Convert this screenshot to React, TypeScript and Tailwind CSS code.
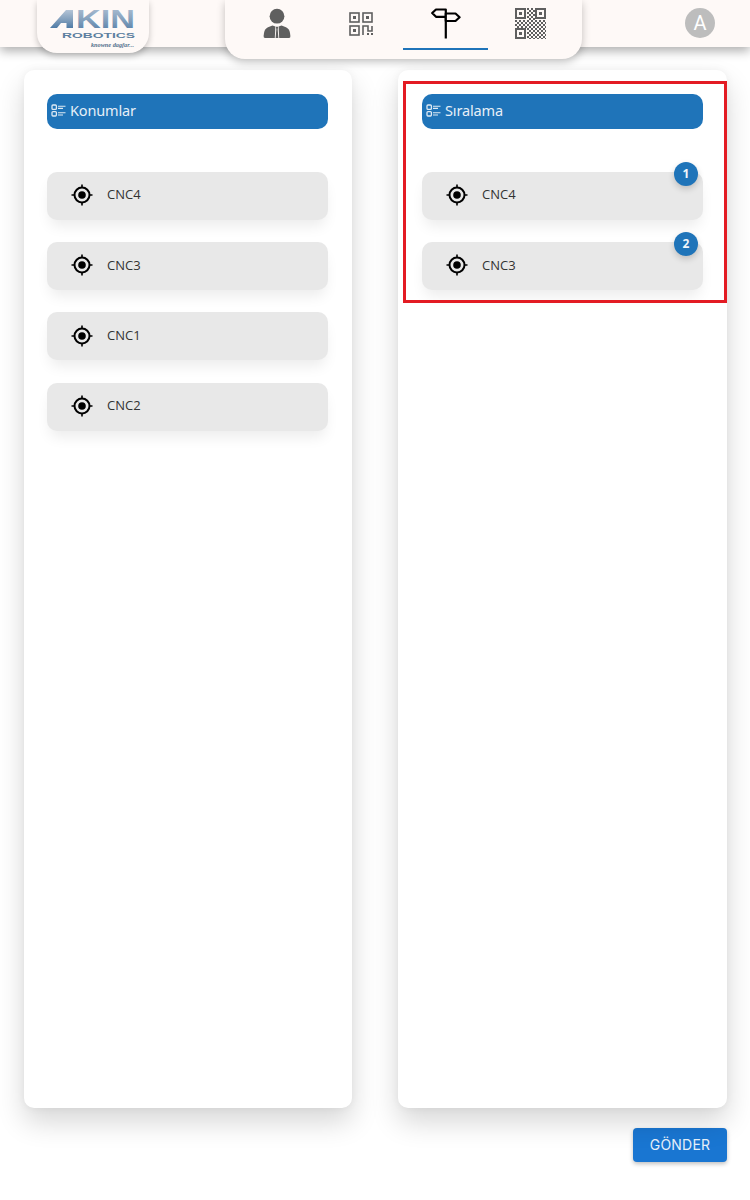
import React from 'react';

const locations = ['CNC4', 'CNC3', 'CNC1', 'CNC2'];
const ordered = ['CNC4', 'CNC3'];

const PersonIcon = () => (
    <svg width="28" height="32" viewBox="0 0 28 32" fill="#5f5f5f">
        <circle cx="14" cy="8.2" r="7.4" />
        <path d="M9.5 17.6 L12.4 18.6 L11.8 30 L2 30 Q0.4 30 0.6 28 L1 25 Q1.6 20.8 5 19.3 Z" />
        <path d="M18.5 17.6 L15.6 18.6 L16.2 30 L26 30 Q27.6 30 27.4 28 L27 25 Q26.4 20.8 23 19.3 Z" />
        <path d="M12.9 18.8 H15.1 L14.7 21.4 L15.4 30 H12.6 L13.3 21.4 Z" />
    </svg>
);

const QrSmallIcon = () => (
    <svg width="24" height="24" viewBox="0 0 24 24" fill="none" stroke="#5f5f5f" strokeWidth="1.6">
        <rect x="1" y="1" width="9" height="9" />
        <rect x="14" y="1" width="9" height="9" />
        <rect x="1" y="14" width="9" height="9" />
        <path d="M14 23 V14 H19 V19 H23 V14" />
        <g fill="#5f5f5f" stroke="none">
            <rect x="4" y="4" width="3" height="3" />
            <rect x="17" y="4" width="3" height="3" />
            <rect x="4" y="17" width="3" height="3" />
            <rect x="18" y="21" width="2" height="2" />
            <rect x="22" y="21" width="2" height="2" />
        </g>
    </svg>
);

const SignpostIcon = () => (
    <svg width="30" height="31" viewBox="0 0 30 31" fill="none" stroke="#000" strokeWidth="2.2" strokeLinejoin="round">
        <path d="M14.8 9 V30.5" />
        <path d="M14.8 1.5 H5 L1.2 5 L5 8.8 H14.8 Z" fill="#fef9f7" />
        <path d="M14.8 5.5 H24.5 L28.6 9.2 L24.5 13 H14.8 Z" fill="#fef9f7" />
    </svg>
);

// dither cells of the big QR code
const qrCells: [number, number][] = [];
for (let y = 0; y < 31; y += 2) {
    for (let x = 0; x < 31; x += 2) {
        const inFinder = (x < 12 && y < 12) || (x > 18 && y < 12) || (x < 12 && y > 18);
        if (!inFinder && (x + y) % 4 === 0) qrCells.push([x, y]);
    }
}

const QrBigIcon = () => (
    <svg width="31" height="31" viewBox="0 0 31 31" fill="none" stroke="#5f5f5f" strokeWidth="2">
        <rect x="1" y="1" width="9" height="9" />
        <rect x="21" y="1" width="9" height="9" />
        <rect x="1" y="21" width="9" height="9" />
        <g fill="#5f5f5f" stroke="none">
            <rect x="4" y="4" width="3" height="3" />
            <rect x="24" y="4" width="3" height="3" />
            <rect x="4" y="24" width="3" height="3" />
            {qrCells.map(([x, y]) => (
                <rect key={`${x}-${y}`} x={x} y={y} width="2" height="2" />
            ))}
        </g>
    </svg>
);

const ChecklistIcon = () => (
    <svg width="15" height="13" viewBox="0 0 15 13" fill="none" stroke="#dfeaf4" strokeWidth="1.3">
        <rect x="1" y="1" width="4.4" height="4.4" rx="1" />
        <rect x="1" y="7.6" width="4.4" height="4.4" rx="1" />
        <path d="M7 2.2 H14.5 M7 4.4 H12 M7 8.8 H14.5 M7 11 H12" strokeWidth="1.1" />
    </svg>
);

const TargetIcon = () => (
    <svg width="22" height="22" viewBox="0 0 22 22" fill="none" stroke="#000" strokeWidth="2">
        <circle cx="11" cy="11" r="7.5" />
        <circle cx="11" cy="11" r="3.8" fill="#000" stroke="none" />
        <path d="M11 0.5 V3.5 M11 18.5 V21.5 M0.5 11 H3.5 M18.5 11 H21.5" strokeWidth="1.6" />
    </svg>
);

const Logo = () => (
    <svg width="88" height="48" viewBox="0 0 88 48">
        <defs>
            <linearGradient id="akin" x1="0" y1="0" x2="0" y2="1">
                <stop offset="0" stopColor="#b4c4d6" />
                <stop offset="0.5" stopColor="#86a2be" />
                <stop offset="1" stopColor="#4f7ba6" />
            </linearGradient>
        </defs>
        <path d="M1 25 L17 7 H24 L24 25 H17.5 L17.5 20 H12 L8 25 Z" fill="url(#akin)" />
        <text x="27" y="25" textLength="59" lengthAdjust="spacingAndGlyphs" fontFamily="Liberation Sans" fontWeight="700" fontSize="25" fill="url(#akin)">
            KIN
        </text>
        <text x="13" y="34.5" textLength="73" lengthAdjust="spacingAndGlyphs" fontFamily="Liberation Sans" fontWeight="700" fontSize="8" fill="#5c7f9f">
            ROBOTICS
        </text>
        <text x="42" y="44" textLength="43" lengthAdjust="spacingAndGlyphs" fontFamily="Liberation Serif" fontStyle="italic" fontWeight="700" fontSize="6" fill="#53708c">
            knowne dagfar...
        </text>
    </svg>
);

const Panel = ({ title, items, numbered, className }: { title: string; items: string[]; numbered?: boolean; className: string }) => (
    <div className={`h-[1038px] w-full rounded-[10px] bg-white pt-6 shadow-[0_14px_28px_rgba(0,0,0,0.16),0_0_8px_rgba(0,0,0,0.05)] ${className}`}>
        <div className="flex h-[35px] items-center gap-[4px] rounded-[10px] bg-[#1f74b9] pb-[2px] pl-[4px] font-['Noto_Sans',sans-serif] text-[14.5px] tracking-[-0.15px] text-[#e6eff7]">
            <ChecklistIcon />
            <span>{title}</span>
        </div>
        <div className="mt-[42.7px] flex flex-col gap-[22.3px]">
            {items.map((item, index) => (
                <div
                    key={item}
                    className="relative flex h-[48px] items-center gap-[14px] rounded-[10px] bg-[#e8e8e8] pb-[1px] pl-[24px] shadow-[0_9px_14px_-3px_rgba(0,0,0,0.08)]"
                >
                    <TargetIcon />
                    <span className="font-['Open_Sans',sans-serif] text-[13px] text-[#333]">{item}</span>
                    {numbered && (
                        <span className="absolute right-[5px] top-[-10px] flex h-6 w-6 items-center justify-center rounded-full bg-[#1f74b9] font-['Open_Sans',sans-serif] text-[12px] font-bold text-[#f2f6fa] shadow-[0_3px_6px_rgba(0,0,0,0.18)]">
                            {index + 1}
                        </span>
                    )}
                </div>
            ))}
        </div>
    </div>
);

export default function App() {
    return (
        <div className="relative h-[1200px] w-[750px] overflow-hidden bg-white">
            <div className="relative z-10 flex h-[47px] items-start bg-[#fef9f7] shadow-[0_4px_10px_rgba(0,0,0,0.32)]">
                <div className="ml-[37px] flex h-[53px] w-[112px] justify-center rounded-b-[20px] bg-[#fef9f7] pt-[3px] shadow-[0_3px_6px_rgba(0,0,0,0.22)]">
                    <Logo />
                </div>
                <div className="ml-[76px] flex h-[59px] w-[357px] items-start rounded-b-[20px] bg-[#fef9f7] pl-[22px] shadow-[0_3px_8px_rgba(0,0,0,0.24)]">
                    <div className="flex w-[60px] justify-center pt-[8px]">
                        <PersonIcon />
                    </div>
                    <div className="ml-[42px] flex w-[24px] justify-center pt-[12px]">
                        <QrSmallIcon />
                    </div>
                    <div className="ml-[30px] flex h-[50px] w-[85px] justify-center border-b-2 border-[#1f74b9] pt-[8px]">
                        <SignpostIcon />
                    </div>
                    <div className="ml-[27px] flex justify-center pt-[8px]">
                        <QrBigIcon />
                    </div>
                </div>
                <div className="ml-[103px] mt-[8px] flex h-[30px] w-[30px] items-center justify-center rounded-full bg-[#bdbdbd] font-['Roboto',sans-serif] text-[20px] text-white">
                    A
                </div>
            </div>

            <div className="flex gap-[46px] pl-[24px] pt-[23px]">
                <div className="w-[328px]">
                    <Panel title="Konumlar" items={locations} className="pl-[23px] pr-[24px]" />
                </div>
                <div className="relative w-[329px]">
                    <Panel title="Sıralama" items={ordered} numbered className="px-[24px]" />
                    <div className="absolute left-[5px] top-[11px] h-[222px] w-[324px] border-[3px] border-[#e31b23]" />
                </div>
            </div>

            <div className="mt-[20px] flex justify-end pr-[23px]">
                <button className="h-[34px] w-[94px] rounded bg-[#1976d2] pb-[1px] font-['Inter',sans-serif] text-[14px] tracking-[0.2px] text-[#e6f0fa] shadow-[0_2px_4px_rgba(0,0,0,0.25)]">
                    GÖNDER
                </button>
            </div>
        </div>
    );
}
